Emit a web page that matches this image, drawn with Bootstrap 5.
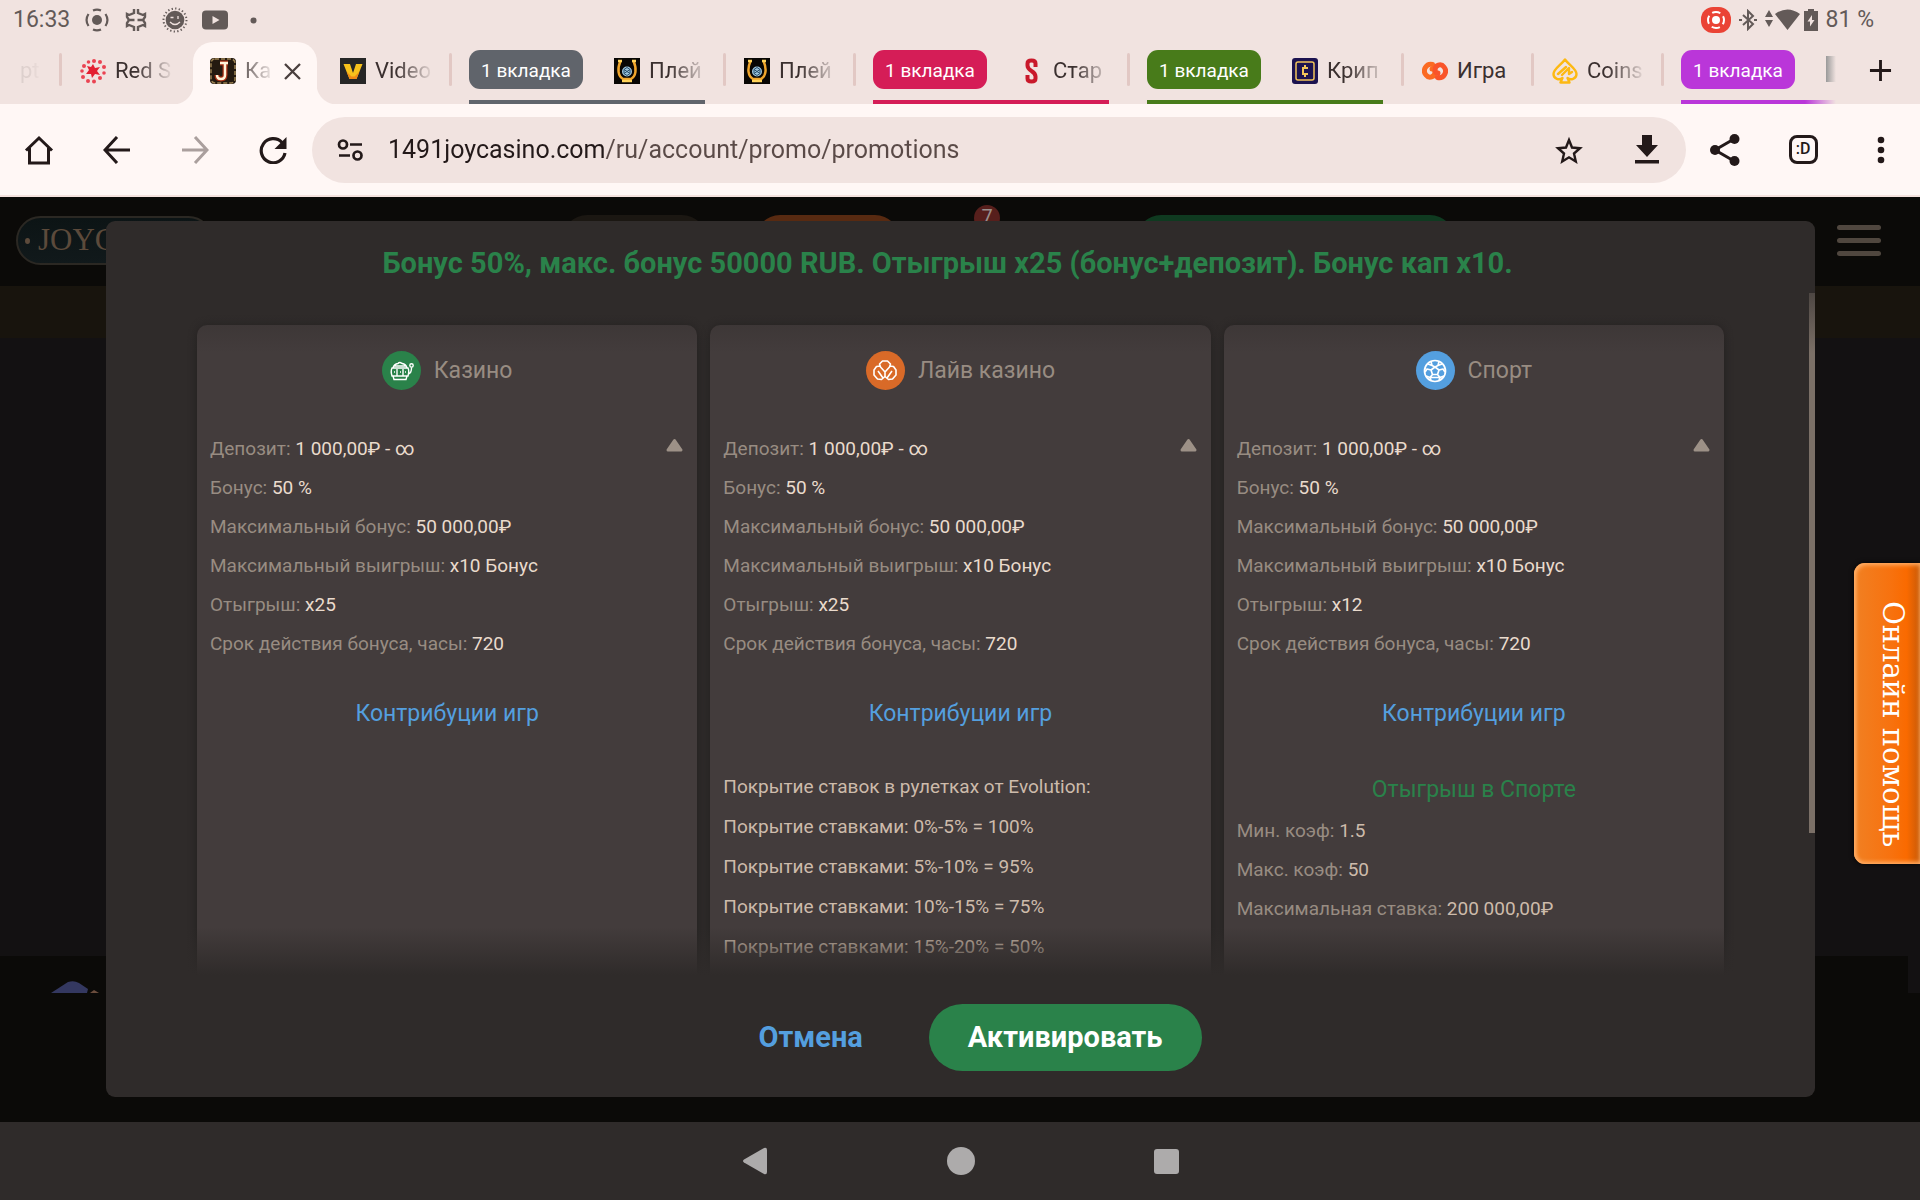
<!DOCTYPE html>
<html lang="ru">
<head>
<meta charset="utf-8">
<meta name="viewport" content="width=device-width, initial-scale=1">
<title>Казино — промо</title>
<link href="https://cdn.jsdelivr.net/npm/bootstrap@5.3.0/dist/css/bootstrap.min.css" rel="stylesheet">
<style>
:root{--chrome:#f1e3e0;--bar:#fff7f5;--ink:#231919;--panel:#2f2b2a;--tile:#433c3c;--green:#2a824a;--blue:#549fdf}
body{font-family:Roboto,"Noto Sans",sans-serif;background:#0b0a08;overflow:hidden}
button{border:0;background:none;padding:0;color:inherit}
svg{display:block;flex:none}

.statusbar{height:40px;padding:0 46px 0 13px;background:var(--chrome);color:#635a58;font-size:23px;line-height:40px}
.notices{gap:14px}
.tabstrip{height:64px;background:var(--chrome);color:#3b302f;overflow:hidden}
.tabitem{width:130px;height:64px;flex:none;position:relative;padding:0 16px 2px 20px;gap:9px;font-size:22px;line-height:30px;color:inherit;text-decoration:none}
.tabitem.first-cut{width:60px}
.tabitem.divided::after,.grouptab.divided::after{content:"";position:absolute;right:-2px;top:13px;width:3px;height:33px;border-radius:2px;background:#e2c8c4}
.tabname{width:59px;white-space:nowrap;overflow:hidden;-webkit-mask-image:linear-gradient(90deg,#000 35%,transparent);mask-image:linear-gradient(90deg,#000 35%,transparent)}
.tabname.whole{-webkit-mask-image:none;mask-image:none}
.tabname.ghost{width:24px;opacity:.1}
.activetab{padding-right:0}
.activetab::before{content:"";position:absolute;left:3px;top:2px;width:124px;height:62px;background:var(--bar);border-radius:20px 20px 0 0}
.activetab .flare{position:absolute;bottom:0;width:20px;height:20px}
.activetab .flare.l{left:-17px;background:radial-gradient(circle at 0 0,transparent 20px,var(--bar) 21px)}
.activetab .flare.r{right:-17px;background:radial-gradient(circle at 100% 0,transparent 20px,var(--bar) 21px)}
.activetab>*{position:relative}
.activetab .tabname{width:30px;-webkit-mask-image:linear-gradient(90deg,rgba(0,0,0,.75),transparent);mask-image:linear-gradient(90deg,rgba(0,0,0,.75),transparent)}
.grouptab{flex:none;height:64px;position:relative;padding-left:19px}
.grouptab::before{content:"";position:absolute;left:19px;right:19px;bottom:0;height:4px;background:var(--g)}
.grouptab .pill{width:114px;height:39px;margin:10px 11px 0 0;border-radius:11px;background:var(--g);color:#fff;font-size:19px;line-height:41px;text-align:center}
.g-grey{--g:#60646b}.g-red{--g:#d51d57}.g-green{--g:#487b1a}.g-purple{--g:#ba36d9}
.grouptab.g-purple{width:174px;overflow:hidden}
.grouptab.g-purple::before{right:0;background:linear-gradient(90deg,var(--g) 80%,transparent)}
.cutfav{width:10px;height:26px;margin-top:16px;margin-left:20px;background:linear-gradient(90deg,#999,transparent)}

.toolbar{height:93px;background:var(--bar);color:var(--ink);border-bottom:2px solid #f5e2de}
.toolbtn{width:78px;height:66px;display:flex;align-items:center;justify-content:center;flex:none}
.omnibox{height:66px;border-radius:33px;background:var(--chrome);padding-left:25px}
.addr{font-size:25px;line-height:34px;border:0;outline:0;padding:0;min-width:0;color:var(--ink);-webkit-text-fill-color:transparent;background:linear-gradient(90deg,var(--ink) 217px,#5a4a47 217px);-webkit-background-clip:text;background-clip:text}
.smile{width:29px;height:29px;border:3px solid currentColor;border-radius:8px;font-size:16px;font-weight:500;line-height:21px;text-align:center}

.site{background:#131112;overflow:hidden;position:relative}
.sitehead{height:89px;background:#0b0a08;padding:0 39px 0 16px;position:relative}
.sitebrand{width:197px;height:49px;margin-top:19px;border:2px solid #2b2823;border-radius:25px;background:linear-gradient(#0c1415,#11191b);padding-left:20px;color:#5c4a3b;font-family:"Liberation Serif",serif;font-size:31px;line-height:44px;text-decoration:none;overflow:hidden;position:relative}
.sitebrand::before{content:"";position:absolute;left:7px;top:20px;width:5px;height:6px;border-radius:50%;background:#5c4a3b}
.headpill{height:50px;width:145px;border-radius:25px;margin-top:18px}
.count{width:26px;height:26px;margin-top:8px;border-radius:50%;background:#571f1c;color:#998f8c;font-size:20px;line-height:24px;text-align:center}
.burger{gap:8px;margin-top:28px}
.burger span{display:block;width:44px;height:5px;border-radius:3px;background:#50473f}
.siteband{height:52px;background:#18140d}
.sitefoot{height:166px;background:#0b0a08;position:relative}
.sitefoot::after{content:"";position:absolute;right:0;top:0;width:12px;height:37px;background:#131112}
.hat{margin:25px 0 0 51px}

.veil{position:absolute;inset:0;padding:24px 105px 25px 106px}
.promo{background:var(--panel);border-radius:9px;position:relative;overflow:hidden}
.promo h1{margin:0;padding:24px 131px 12px 105px;height:72px;font-size:29px;line-height:36px;font-weight:700;color:var(--green);text-align:center;white-space:nowrap}
.scroller{position:relative;padding:32px 91px 0;overflow:hidden;min-height:0}
.scroller::before{content:"";position:absolute;left:0;right:0;top:0;height:60px;z-index:1;background:linear-gradient(var(--panel),transparent);opacity:.6}
.scroller::after{content:"";position:absolute;left:0;right:0;bottom:0;height:48px;z-index:1;background:linear-gradient(transparent,var(--panel))}
.thumb{position:absolute;right:0;top:72px;width:6px;height:540px;background:#7b7067}
.tiles{gap:13px}
.tile{flex:1 1 0;min-width:0;height:700px;background:var(--tile);border-radius:10px 10px 0 0;box-shadow:0 0 10px rgba(0,0,0,.3);padding:26px 13px 0;color:#988c82;font-size:19px}
.tilehead{gap:13px;font-size:23px;line-height:39px;margin-bottom:39px;font-weight:400}
.disc{width:39px;height:39px;border-radius:50%;display:flex;align-items:center;justify-content:center;color:#fff}
.facts{margin:0;line-height:39px;position:relative}
.facts dt,.facts dd{display:inline;font-weight:400;margin:0}
.facts dd{color:#eadbcd}
.facts.soft dd{color:#cdbbab}
.facts .fold{position:absolute;right:1px;top:9px}
.games{display:block;text-align:center;margin-top:36px;font-size:23px;line-height:30px;color:var(--blue);text-decoration:none}
.cover{margin:38px 0 0;line-height:40px;color:#cdbbab}
.sub{margin:46px 0 6px;font-size:23px;line-height:30px;font-weight:400;text-align:center;color:var(--green)}
.acts{height:122px;padding:29px 0 26px;font-size:29px;gap:27px}
.cancelbtn{color:var(--blue);padding:0 39px;font-weight:700}
.okbtn{background:var(--green);color:#fff;font-weight:700;height:67px;padding:0 39px;border-radius:34px}

.helptab{position:absolute;right:0;top:366px;width:66px;height:301px;border-radius:11px 0 0 11px;background:linear-gradient(90deg,#f18023,#f7720f 55%,#fa6a00 80%,#c85a08);box-shadow:inset 2px 2px 4px #ffae66,inset 0 -2px 4px #ffae66,0 0 5px #000;color:#fff;font-family:"DejaVu Serif",serif;font-size:29px;line-height:40px;writing-mode:vertical-rl;text-align:center;padding:22px 7px 0 19px}
.sysnav{height:78px;background:var(--panel);color:#adabab;gap:179px}
</style>
<script src="https://cdn.jsdelivr.net/npm/bootstrap@5.3.0/dist/js/bootstrap.bundle.min.js"></script>
</head>
<body class="vh-100 d-flex flex-column">

<svg width="0" height="0" class="position-absolute" aria-hidden="true">
  <symbol id="horseshoe" viewBox="0 0 26 26">
    <rect width="26" height="26" fill="#080604"/>
    <path d="M6.500 3C3 11 4 18 9 21h8c5-3 6-10 2.500-18" fill="none" stroke="#f0a52c" stroke-width="2.500"/>
    <path d="M4 3h4M18 3h4M8 23h10" stroke="#ffd35a" stroke-width="2.500"/>
    <circle cx="13" cy="13.500" r="5" fill="#9cc3dc"/><path d="M10 11.500l3-2 3 2v4l-3 2-3-2zM10 11.500l6 4M16 11.500l-6 4" fill="none" stroke="#29506e"/>
  </symbol>
</svg>

<div class="statusbar d-flex align-items-center">
  <div class="notices d-flex align-items-center">
    <span>16:33</span>
    <svg width="26" height="26" viewBox="0 0 26 26" fill="none" stroke="currentColor" stroke-width="2.200"><circle cx="13" cy="13" r="5" fill="currentColor" stroke="none"/><path d="M9 3.500a10 10 0 0 1 8 0M9 22.500a10 10 0 0 0 8 0M4.500 7a11 11 0 0 0 0 12M21.500 7a11 11 0 0 1 0 12"/></svg>
    <svg width="24" height="24" viewBox="0 0 24 24" fill="none" stroke="currentColor" stroke-width="2.400"><path d="M10 1v4L5 7 3 6v3l2 3-2 3v3l2-1 5 2v4M14 1v4l5 2 2-1v3l-2 3 2 3v3l-2-1-5 2v4M5 12h5.500M19 12h-5.500"/></svg>
    <svg width="26" height="26" viewBox="0 0 26 26"><circle cx="13" cy="13" r="11.500" fill="none" stroke="currentColor" stroke-width="2" stroke-dasharray="1.300 2.300"/><circle cx="13" cy="13" r="9.300" fill="currentColor"/><path d="M8 15q5 5 10 0M8.500 10.500h3M16 9v3" fill="none" stroke="#f1e3e0" stroke-width="1.300"/></svg>
    <svg width="26" height="20" viewBox="0 0 26 20"><rect width="26" height="19" y=".5" rx="4" fill="currentColor"/><path d="M10.500 6v8l7-4z" fill="#f1e3e0"/></svg>
    <svg class="ms-2" width="7" height="7"><circle cx="3.500" cy="3.500" r="3" fill="currentColor"/></svg>
  </div>
  <div class="ms-auto d-flex align-items-center">
    <svg width="30" height="26" viewBox="0 0 30 26"><rect width="30" height="26" rx="12" fill="#ea4335"/><circle cx="15" cy="13" r="4" fill="#fff"/><circle cx="15" cy="13" r="8" fill="none" stroke="#fff" stroke-width="2" stroke-dasharray="8.500 4" stroke-dashoffset="4"/></svg>
    <svg class="ms-2" width="18" height="22" viewBox="0 0 18 22" fill="none" stroke="currentColor" stroke-width="2"><path d="M4 6l10 9-5 5V2l5 5-10 9M0 11h3M15 11h3"/></svg>
    <svg class="ms-2" width="35" height="22" viewBox="0 0 35 22" fill="currentColor"><path d="M4 1l4 7H0zM4 18l4-7H0zM10 5q12.500-9 25 0L22.500 21z"/></svg>
    <svg class="ms-1 me-2" width="14" height="22" viewBox="0 0 14 22"><path d="M4 0h6v2h4v20H0V2h4z" fill="currentColor"/><path d="M8 6l-4.500 6.500H6v5l4.500-6.500H8z" fill="#f1e3e0"/></svg>
    <span>81 %</span>
  </div>
</div>

<nav class="tabstrip d-flex">
  <a href="#" class="tabitem first-cut divided d-flex align-items-center"><span class="tabname ghost">pt</span></a>
  <a href="#" class="tabitem d-flex align-items-center"><svg width="26" height="26" viewBox="0 0 26 26"><path d="M13 6l2 4 5-1-3 4 3 4-5-1-3 4-1-4-5 0 3-4-2-4 4 1z" fill="#e31f31"/><g fill="#ea4452"><circle cx="14" cy="3" r="2"/><circle cx="20" cy="4" r="2"/><circle cx="24" cy="9" r="2"/><circle cx="24" cy="15" r="1.800"/><circle cx="20" cy="20" r="2"/><circle cx="14" cy="23.500" r="2"/><circle cx="8" cy="23" r="2"/><circle cx="3" cy="19" r="2"/><circle cx="2" cy="13" r="1.800"/><circle cx="4" cy="8" r="2"/><circle cx="8.500" cy="4" r="1.800"/></g></svg><span class="tabname">Red S</span></a>
  <div class="tabitem activetab d-flex align-items-center">
    <i class="flare l position-absolute"></i><i class="flare r position-absolute"></i>
    <svg width="26" height="26" viewBox="0 0 26 26"><rect width="26" height="26" rx="4" fill="#241a10"/><rect x="1" y="1" width="24" height="24" rx="4" fill="none" stroke="#9c8253" stroke-width="1.500" stroke-dasharray="4 2"/><path d="M10 5h8M15 5v12q0 4-4 4-4 0-4-4" fill="none" stroke="#a52d10" stroke-width="5"/><path d="M10 5h8M15 5v12q0 4-4 4-4 0-4-4" fill="none" stroke="#fff3d8" stroke-width="2.500"/></svg>
    <span class="tabname">Ка</span>
    <button aria-label="Закрыть"><svg width="17" height="17" viewBox="0 0 17 17" stroke="#4a3f3e" stroke-width="2.300"><path d="M1 1l15 15M16 1L1 16"/></svg></button>
  </div>
  <a href="#" class="tabitem divided d-flex align-items-center"><svg width="26" height="26" viewBox="0 0 26 26"><rect width="26" height="26" fill="#262626"/><path d="M3.500 6h6.500l3 9 3-9h6.500l-6 15h-7z" fill="#f8c21c"/><path d="M6.500 13.500L9.500 21h7l3-7.500-5 5h-3z" fill="#f08a16"/></svg><span class="tabname">Video</span></a>
  <div class="grouptab g-grey divided d-flex"><button class="pill">1 вкладка</button><a href="#" class="tabitem d-flex align-items-center"><svg width="26" height="26"><use href="#horseshoe"/></svg><span class="tabname">Плей</span></a></div>
  <a href="#" class="tabitem divided d-flex align-items-center"><svg width="26" height="26"><use href="#horseshoe"/></svg><span class="tabname">Плей</span></a>
  <div class="grouptab g-red divided d-flex"><button class="pill">1 вкладка</button><a href="#" class="tabitem d-flex align-items-center"><svg width="26" height="26" viewBox="0 0 26 26"><path d="M17.500 9V5.500q0-3-4-3t-4 3v2q0 3 4 5.500t4 5.500v2q0 3-4 3t-4-3V17" fill="none" stroke="#c9192b" stroke-width="4"/></svg><span class="tabname">Стар</span></a></div>
  <div class="grouptab g-green divided d-flex"><button class="pill">1 вкладка</button><a href="#" class="tabitem d-flex align-items-center"><svg width="26" height="26" viewBox="0 0 26 26" fill="none" stroke="#f1c45a"><rect width="26" height="26" rx="3" fill="#1c1350" stroke="none"/><rect x="4" y="4" width="18" height="18" rx="2" stroke-width="1.500"/><path d="M16 10h-5v6h5M13 7v3M13 16v3" stroke-width="2"/></svg><span class="tabname">Крип</span></a></div>
  <a href="#" class="tabitem divided d-flex align-items-center"><svg width="26" height="26" viewBox="0 0 26 26" fill="none" stroke-width="5" stroke-linecap="round"><path d="M10.500 6.500A6.500 6.500 0 0 0 4 17c3 4 9 2 9-3 0-2-1-3-3-3" stroke="#fb6a22"/><path d="M15.500 19.500A6.500 6.500 0 0 0 22 9c-3-4-9-2-9 3 0 2 1 3 3 3" stroke="#f9542a"/></svg><span class="tabname whole">Игра</span></a>
  <a href="#" class="tabitem divided d-flex align-items-center"><svg width="26" height="26" viewBox="0 0 26 26" fill="none" stroke="#fdb913" stroke-width="2.400" stroke-linejoin="round" stroke-linecap="round"><path d="M13 1.500C9 7 1.500 11 1.500 16c0 5 6 6.500 9 4l-2 4.500h9L15.500 20c3 2.500 9 1 9-4 0-5-7.500-9-11.500-14.500zM6 16l8-7M10 17l7-7v6l3-2"/></svg><span class="tabname">Coins</span></a>
  <div class="grouptab g-purple d-flex"><button class="pill">1 вкладка</button><span class="cutfav"></span></div>
  <button class="ms-auto me-4 pe-1 pb-1" aria-label="Новая вкладка"><svg width="23" height="23" viewBox="0 0 24 24" stroke="#231919" stroke-width="3"><path d="M12 1v22M1 12h22"/></svg></button>
</nav>

<div class="toolbar d-flex align-items-center">
  <button class="toolbtn" aria-label="Домой"><svg width="30" height="30" viewBox="0 0 30 30" fill="none" stroke="currentColor" stroke-width="3"><path d="M2 15.500L15 3l13 12.500M5.500 13v15h19V13"/></svg></button>
  <button class="toolbtn" aria-label="Назад"><svg width="28" height="28" viewBox="0 0 28 28" fill="none" stroke="currentColor" stroke-width="3"><path d="M14 1L2 14l12 13M2 14h25"/></svg></button>
  <button class="toolbtn" aria-label="Вперёд"><svg width="28" height="28" viewBox="0 0 28 28" fill="none" stroke="#aa9f9d" stroke-width="3"><path d="M14 1l12 13-12 13M26 14H1"/></svg></button>
  <button class="toolbtn" aria-label="Обновить"><svg width="28" height="28" viewBox="0 0 28 28" fill="none" stroke="currentColor" stroke-width="3.200"><path d="M23 6.500A12 12 0 1 0 26 17"/><path d="M27.500 1v12h-12z" fill="currentColor" stroke="none"/></svg></button>
  <div class="omnibox d-flex align-items-center flex-grow-1">
    <svg class="me-4" width="27" height="22" viewBox="0 0 27 22" fill="none" stroke="currentColor" stroke-width="2.700"><circle cx="6" cy="5.500" r="4"/><circle cx="20.500" cy="16.500" r="4"/><path d="M13 5.500h12M2 16.500h11"/></svg>
    <input class="addr flex-grow-1" type="text" aria-label="Адрес" value="1491joycasino.com/ru/account/promo/promotions">
    <button class="toolbtn" aria-label="В закладки"><svg width="28" height="28" viewBox="0 0 28 28" fill="none" stroke="currentColor" stroke-width="2.400"><path d="M14 4l3 7.500 8 .7-6 5.300 1.800 8L14 21.300 7.200 25.500 9 17.500 3 12.200l8-.7z"/></svg></button>
    <button class="toolbtn" aria-label="Скачать"><svg width="26" height="29" viewBox="0 0 26 29" fill="currentColor"><path d="M8 0h10v10h6L13 22 2 10h6zM1 25h24v3.500H1z"/></svg></button>
  </div>
  <button class="toolbtn" aria-label="Поделиться"><svg width="30" height="32" viewBox="0 0 30 32" fill="currentColor"><path d="M24 5L5 16l19 11" fill="none" stroke="currentColor" stroke-width="3"/><circle cx="24.500" cy="5" r="5"/><circle cx="5" cy="16" r="5"/><circle cx="24.500" cy="27" r="5"/></svg></button>
  <button class="toolbtn" aria-label="Вкладки"><span class="smile">:D</span></button>
  <button class="toolbtn" aria-label="Меню"><svg width="8" height="28" viewBox="0 0 8 28" fill="currentColor"><circle cx="4" cy="4" r="3.300"/><circle cx="4" cy="14" r="3.300"/><circle cx="4" cy="24" r="3.300"/></svg></button>
</div>

<main class="site flex-grow-1 d-flex flex-column">
  <header class="sitehead d-flex align-items-start">
    <a href="#" class="sitebrand">JOYCASINO</a>
    <div class="d-flex align-items-start flex-grow-1">
      <span class="headpill" style="background:#1b1712;margin-left:349px"></span>
      <span class="headpill" style="background:#582a11;margin-left:48px"></span>
      <span class="count" style="margin-left:74px">7</span>
      <span class="headpill" style="width:319px;background:#0f3a20;margin-left:136px"></span>
    </div>
    <button class="burger d-grid" aria-label="Меню сайта"><span></span><span></span><span></span></button>
  </header>
  <div class="siteband"></div>
  <div class="flex-grow-1"></div>
  <footer class="sitefoot"><svg class="hat position-absolute" width="48" height="12" viewBox="0 0 48 12"><path d="M0 12L17 1q6-2 11 1l9 6-1 4z" fill="#343860"/><path d="M39 12l4-3 5 3z" fill="#6b4d3d"/></svg></footer>

  <div class="veil d-flex">
    <section class="promo flex-grow-1 d-flex flex-column" role="dialog" aria-labelledby="promo-title">
      <h1 id="promo-title">Бонус 50%, макс. бонус 50000 RUB. Отыгрыш x25 (бонус+депозит). Бонус кап x10.</h1>
      <div class="scroller flex-grow-1">
        <div class="tiles d-flex">
          <article class="tile">
            <h2 class="tilehead d-flex justify-content-center"><span class="disc" style="background:#2a824a"><svg width="26" height="20" viewBox="0 0 26 20" fill="none" stroke="currentColor" stroke-width="1.400"><path d="M5 7q1-4 5-4.500 1.500-2 4 0Q18 3 19 7M4 7h16q1.500 3 0 8H4q-1.500-5 0-8zM5 15l1 3.500h12l1-3.500M9 8v7M15 8v7M6 11h1M12 11h1M17 11h1M6 5h12M20.500 13q3-1 3-6"/><circle cx="23.500" cy="4.500" r="1.700"/></svg></span>Казино</h2>
            <dl class="facts">
              <div><dt>Депозит:</dt> <dd>1 000,00₽ - ∞</dd></div><div><dt>Бонус:</dt> <dd>50 %</dd></div><div><dt>Максимальный бонус:</dt> <dd>50 000,00₽</dd></div><div><dt>Максимальный выигрыш:</dt> <dd>x10 Бонус</dd></div><div><dt>Отыгрыш:</dt> <dd>x25</dd></div><div><dt>Срок действия бонуса, часы:</dt> <dd>720</dd></div>
              <button class="fold" aria-label="Свернуть"><svg width="17" height="14" viewBox="0 0 17 14"><path d="M8.500 2.500L15 12H2z" fill="#9d9187" stroke="#9d9187" stroke-width="3" stroke-linejoin="round"/></svg></button>
            </dl>
            <a href="#" class="games">Контрибуции игр</a>
          </article>
          <article class="tile">
            <h2 class="tilehead d-flex justify-content-center"><span class="disc" style="background:#d96a28"><svg width="24" height="21" viewBox="0 0 24 21" fill="none" stroke="currentColor" stroke-width="1.600" stroke-linejoin="round"><path d="M7.500 7L6.500 4l3-3h5l3 3-1 3-4.500 5zM7.500 6L3.500 6.500 1 10v5l3.500 4 4 .5 3.500-3V12M16.500 6l4 .5 2.500 3.500v5l-3.500 4-4 .5-3.500-3M5 11l5 7M19 11l-5 7"/></svg></span>Лайв казино</h2>
            <dl class="facts">
              <div><dt>Депозит:</dt> <dd>1 000,00₽ - ∞</dd></div><div><dt>Бонус:</dt> <dd>50 %</dd></div><div><dt>Максимальный бонус:</dt> <dd>50 000,00₽</dd></div><div><dt>Максимальный выигрыш:</dt> <dd>x10 Бонус</dd></div><div><dt>Отыгрыш:</dt> <dd>x25</dd></div><div><dt>Срок действия бонуса, часы:</dt> <dd>720</dd></div>
              <button class="fold" aria-label="Свернуть"><svg width="17" height="14" viewBox="0 0 17 14"><path d="M8.500 2.500L15 12H2z" fill="#9d9187" stroke="#9d9187" stroke-width="3" stroke-linejoin="round"/></svg></button>
            </dl>
            <a href="#" class="games">Контрибуции игр</a>
            <p class="cover">Покрытие ставок в рулетках от Evolution:<br>Покрытие ставками: 0%-5% = 100%<br>Покрытие ставками: 5%-10% = 95%<br>Покрытие ставками: 10%-15% = 75%<br>Покрытие ставками: 15%-20% = 50%</p>
          </article>
          <article class="tile">
            <h2 class="tilehead d-flex justify-content-center"><span class="disc" style="background:#549fdf"><svg width="24" height="24" viewBox="0 0 24 24" fill="none" stroke="currentColor" stroke-width="1.700" stroke-linejoin="round"><circle cx="12" cy="12" r="10.500"/><path d="M12 8l4 3-1.500 4.500h-5L8 11zM16 11l4-1 2 3M14.500 15.500l2.500 3-1 3M9.500 15.500L7 18.500l1 3M8 11l-4-1-2 3M12 8L9 6.500 8 2.500M12 8l3-1.500 1-4M9 6.500L5 5M15 6.500L19 5M7 18.500L3 17M17 18.500l4-1.500M7 18.500h10"/></svg></span>Спорт</h2>
            <dl class="facts">
              <div><dt>Депозит:</dt> <dd>1 000,00₽ - ∞</dd></div><div><dt>Бонус:</dt> <dd>50 %</dd></div><div><dt>Максимальный бонус:</dt> <dd>50 000,00₽</dd></div><div><dt>Максимальный выигрыш:</dt> <dd>x10 Бонус</dd></div><div><dt>Отыгрыш:</dt> <dd>x12</dd></div><div><dt>Срок действия бонуса, часы:</dt> <dd>720</dd></div>
              <button class="fold" aria-label="Свернуть"><svg width="17" height="14" viewBox="0 0 17 14"><path d="M8.500 2.500L15 12H2z" fill="#9d9187" stroke="#9d9187" stroke-width="3" stroke-linejoin="round"/></svg></button>
            </dl>
            <a href="#" class="games">Контрибуции игр</a>
            <h3 class="sub">Отыгрыш в Спорте</h3>
            <dl class="facts soft"><div><dt>Мин. коэф:</dt> <dd>1.5</dd></div><div><dt>Макс. коэф:</dt> <dd>50</dd></div><div><dt>Максимальная ставка:</dt> <dd>200 000,00₽</dd></div></dl>
          </article>
        </div>
      </div>
      <div class="thumb"></div>
      <div class="acts d-flex justify-content-center align-items-center flex-shrink-0">
        <button class="cancelbtn">Отмена</button>
        <button class="okbtn">Активировать</button>
      </div>
    </section>
  </div>
  <button class="helptab">Онлайн помощь</button>
</main>

<div class="sysnav d-flex justify-content-center align-items-center">
  <button aria-label="Назад"><svg width="26" height="28" viewBox="0 0 26 28" fill="currentColor"><path d="M2 12.500L22 1q3-1 3 2v22q0 3-3 2L2 15.500q-2-1.500 0-3z"/></svg></button>
  <button aria-label="Главный экран"><svg width="28" height="28"><circle cx="14" cy="14" r="14" fill="currentColor"/></svg></button>
  <button aria-label="Недавние"><svg width="25" height="25"><rect width="25" height="25" rx="3" fill="currentColor"/></svg></button>
</div>
</body>
</html>
